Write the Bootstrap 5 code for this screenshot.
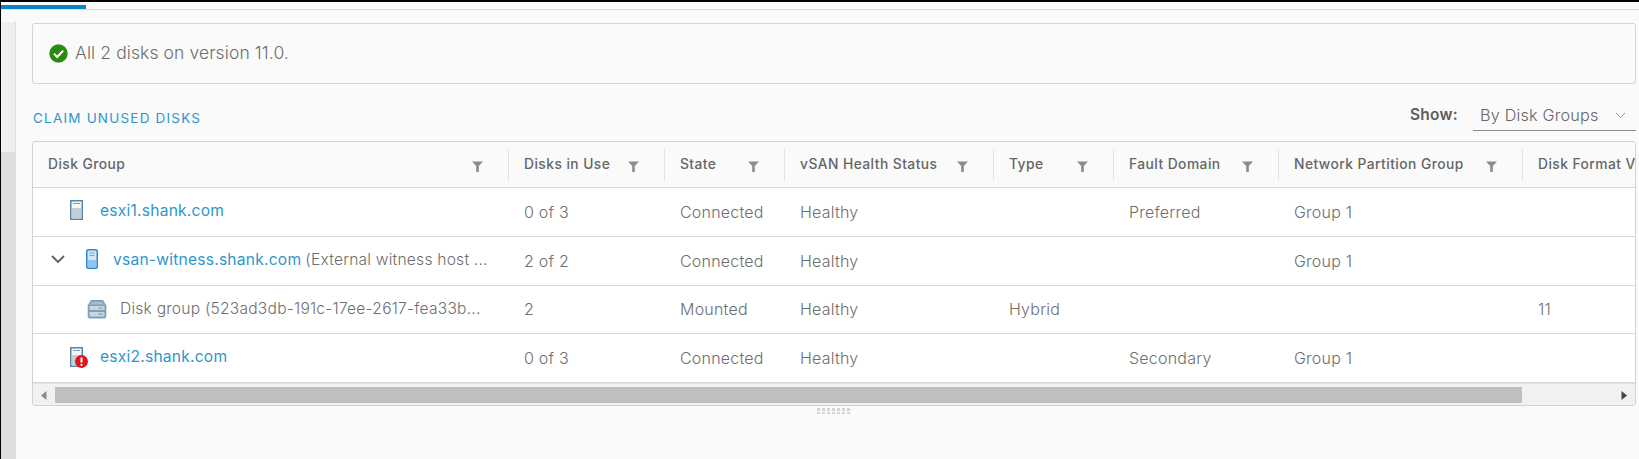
<!DOCTYPE html>
<html lang="en">
<head>
<meta charset="utf-8">
<title>vSAN Disk Management</title>
<link rel="stylesheet" href="https://cdn.jsdelivr.net/npm/bootstrap@5.3.0/dist/css/bootstrap.min.css">
<style>
html,body{height:100%;}
body{background:#fafafa;font-family:Inter,"Liberation Sans",sans-serif;font-size:15px;color:#707070;border-left:1px solid #000;overflow:hidden;}
.topline{height:2px;background:#000;margin-left:-1px;}
.tabstrip{height:8px;border-bottom:1px solid #dcdcdc;padding-top:3px;}
.tabmark{width:85px;height:4px;background:#0a84c6;}
.rail-wrap{padding-top:12px;width:15px;flex:none;}
.rail{width:15px;border-right:1px solid #dcdcdc;height:calc(100vh - 22px);background:linear-gradient(#efefef 130px,#dedede 130px);}
.content{padding:13px 3px 0 16px;min-width:0;flex:1;}
.notice{height:61px;border:1px solid #d4d4d4;border-radius:3px;padding-left:16px;gap:7px;font-size:17.5px;font-weight:300;color:#6e6e6e;letter-spacing:.1px;}
.toolbar{height:47px;margin-bottom:10px;}
.claim{color:#2f96cb;font-size:13.5px;letter-spacing:1.2px;font-weight:400;text-transform:uppercase;margin-bottom:3px;text-decoration:none;margin-left:1px;}
.showlbl{font-size:15.5px;font-weight:600;color:#5c5c5c;margin-right:15px;margin-bottom:5px;letter-spacing:.25px;}
.pick{width:163px;height:31px;border-bottom:1px solid #8a8a8a;padding-left:7px;padding-right:10px;font-size:16.2px;font-weight:300;color:#666;letter-spacing:.2px;}
.gridbox{border:1px solid #d2d2d2;border-radius:3px;overflow:hidden;background:#fff;}
.grid-scroll{overflow:hidden;}
.vtable{table-layout:fixed;width:1700px;margin:0;border-collapse:separate;border-spacing:0;--bs-table-bg:transparent;}
.vtable th{background:#fafafa;padding:0;height:46px;border-bottom:1px solid #d8d8d8;font-size:13.8px;font-weight:500;color:#666;letter-spacing:.45px;vertical-align:middle;}
.headcell{height:31px;border-right:1px solid #e2e2e2;padding:0 25px 0 15px;white-space:nowrap;overflow:hidden;}
.headcell svg{margin-top:3px;flex:none;}
.vtable th:last-child .headcell{border-right:0;overflow:visible;}
.vtable td{height:48.8px;padding:0 15px;border-bottom:1px solid #d8d8d8;vertical-align:middle;font-size:16px;font-weight:300;color:#6e6e6e;white-space:nowrap;overflow:hidden;letter-spacing:.22px;}
.vtable a{color:#2f96cb;text-decoration:none;font-weight:400;font-size:15.6px;}
.namewrap{height:100%;margin-bottom:3px;font-size:15.6px;}
.ind1{padding-left:22px;gap:17px;}
.ind3{padding-left:39px;gap:13px;margin-bottom:1px;}
.chev{width:20px;margin-right:18px;flex:none;}
.hostic{width:12px;margin-right:15px;flex:none;}
.hostbox{width:13px;height:20px;flex:none;}
.alertmark{left:5px;top:8px;}
.scrollrow{height:22px;background:#f1f1f1;border-top:1px solid #e4e4e4;padding:3px 0 2px;}
.sbend{width:22px;flex:none;}
.sbthumb{width:1467px;background:#bfbfbf;flex:none;}
.grip{width:34px;height:6px;margin:2px auto 0;display:grid;grid-template-columns:repeat(7,3px);grid-template-rows:repeat(2,2.5px);gap:1px 2px;}
.grip i{background:#d4d4d4;display:block;}
</style>
</head>
<body>
<div class="topline"></div>
<div class="tabstrip"><div class="tabmark"></div></div>
<div class="d-flex">
  <div class="rail-wrap"><div class="rail"></div></div>
  <main class="content">
    <div class="notice d-flex align-items-center">
      <svg width="19" height="19" viewBox="0 0 19 19"><circle cx="9.5" cy="9.5" r="9.2" fill="#2a8a12"/><path d="M5 9.8l3.2 3.2 6-6.4" fill="none" stroke="#fff" stroke-width="2"/></svg>
      <span>All 2 disks on version 11.0.</span>
    </div>
    <div class="toolbar d-flex justify-content-between align-items-end">
      <a class="claim" href="#">Claim Unused Disks</a>
      <div class="d-flex align-items-end">
        <span class="showlbl">Show:</span>
        <div class="pick d-flex align-items-center justify-content-between">
          <span>By Disk Groups</span>
          <svg width="11" height="7" viewBox="0 0 11 7"><path d="M1 1l4.5 4.5L10 1" fill="none" stroke="#9a9a9a" stroke-width="1"/></svg>
        </div>
      </div>
    </div>
    <div class="gridbox">
      <div class="grid-scroll">
        <table class="table vtable">
          <colgroup><col style="width:476px"><col style="width:156px"><col style="width:120px"><col style="width:209px"><col style="width:120px"><col style="width:165px"><col style="width:244px"><col style="width:210px"></colgroup>
          <thead>
            <tr>
              <th><div class="headcell d-flex align-items-center justify-content-between">Disk Group<svg width="11" height="11" viewBox="0 0 11 11"><path d="M0 .5h11L6.800 5v6H4.200V5z" fill="#8c8c8c"/></svg></div></th>
              <th><div class="headcell d-flex align-items-center justify-content-between">Disks in Use<svg width="11" height="11" viewBox="0 0 11 11"><path d="M0 .5h11L6.800 5v6H4.200V5z" fill="#8c8c8c"/></svg></div></th>
              <th><div class="headcell d-flex align-items-center justify-content-between">State<svg width="11" height="11" viewBox="0 0 11 11"><path d="M0 .5h11L6.800 5v6H4.200V5z" fill="#8c8c8c"/></svg></div></th>
              <th><div class="headcell d-flex align-items-center justify-content-between">vSAN Health Status<svg width="11" height="11" viewBox="0 0 11 11"><path d="M0 .5h11L6.800 5v6H4.200V5z" fill="#8c8c8c"/></svg></div></th>
              <th><div class="headcell d-flex align-items-center justify-content-between">Type<svg width="11" height="11" viewBox="0 0 11 11"><path d="M0 .5h11L6.800 5v6H4.200V5z" fill="#8c8c8c"/></svg></div></th>
              <th><div class="headcell d-flex align-items-center justify-content-between">Fault Domain<svg width="11" height="11" viewBox="0 0 11 11"><path d="M0 .5h11L6.800 5v6H4.200V5z" fill="#8c8c8c"/></svg></div></th>
              <th><div class="headcell d-flex align-items-center justify-content-between">Network Partition Group<svg width="11" height="11" viewBox="0 0 11 11"><path d="M0 .5h11L6.800 5v6H4.200V5z" fill="#8c8c8c"/></svg></div></th>
              <th><div class="headcell d-flex align-items-center">Disk Format Version</div></th>
            </tr>
          </thead>
          <tbody>
            <tr>
              <td><div class="namewrap d-flex align-items-center ind1">
                <svg class="hostbox" viewBox="0 0 13 20"><rect x=".75" y=".75" width="11.5" height="18.5" fill="#f5f7f8" stroke="#5a87a5" stroke-width="1.5"/><rect x="2" y="8" width="9" height="10.500" fill="#c3cfd8"/><path d="M3 3.500h7" stroke="#7d9db3"/></svg>
                <a href="#">esxi1.shank.com</a></div></td>
              <td>0 of 3</td><td>Connected</td><td>Healthy</td><td></td><td>Preferred</td><td>Group 1</td><td></td>
            </tr>
            <tr>
              <td><div class="namewrap d-flex align-items-center">
                <svg class="chev" height="9" viewBox="0 0 14 9"><path d="M1 1l6 6 6-6" fill="none" stroke="#5f5f5f" stroke-width="1.8"/></svg>
                <svg class="hostic" height="20" viewBox="0 0 12 20"><rect x=".75" y=".75" width="10.500" height="18.500" rx="1.500" fill="#cfe6f7" stroke="#2f86cf" stroke-width="1.500"/><rect x="2" y="11" width="8" height="7.500" fill="#8fc4ec"/><path d="M3.500 4h5M3.500 6.500h5" stroke="#6aa9d8"/></svg>
                <a href="#">vsan-witness.shank.com</a><span class="ms-1">(External witness host ...</span></div></td>
              <td>2 of 2</td><td>Connected</td><td>Healthy</td><td></td><td></td><td>Group 1</td><td></td>
            </tr>
            <tr>
              <td><div class="namewrap d-flex align-items-center ind3">
                <svg width="20" height="20" viewBox="0 0 20 20" class="flex-shrink-0"><path d="M.7 6.500 4 1h12l3.300 5.500v11.500l-1.500 1.500H2.200L.7 18z" fill="#7f9fb5"/><path d="M2.500 7h15v4h-15zM2.500 13h15v4.500h-15z" fill="#c9d6df"/><path d="M4.800 2.800h10.400l1.700 2.700H3.100z" fill="#a9bfce"/><path d="M11.500 9h4M11.500 15.200h4" stroke="#6f93ab" stroke-width="1"/></svg>
                <span>Disk group (523ad3db-191c-17ee-2617-fea33b...</span></div></td>
              <td>2</td><td>Mounted</td><td>Healthy</td><td>Hybrid</td><td></td><td></td><td>11</td>
            </tr>
            <tr>
              <td><div class="namewrap d-flex align-items-center ind1">
                <span class="position-relative d-block hostbox">
                  <svg class="d-block hostbox" viewBox="0 0 13 20"><rect x=".75" y=".75" width="11.500" height="18.500" fill="#f5f7f8" stroke="#5a87a5" stroke-width="1.500"/><rect x="2" y="8" width="9" height="10.500" fill="#c3cfd8"/><path d="M3 3.500h7" stroke="#7d9db3"/></svg>
                  <svg class="position-absolute alertmark" width="13" height="13" viewBox="0 0 13 13"><circle cx="6.500" cy="6.500" r="6.500" fill="#e0141c"/><path d="M6.500 2.500v5" stroke="#fff" stroke-width="2"/><circle cx="6.500" cy="9.800" r="1.100" fill="#fff"/></svg>
                </span>
                <a href="#">esxi2.shank.com</a></div></td>
              <td>0 of 3</td><td>Connected</td><td>Healthy</td><td></td><td>Secondary</td><td>Group 1</td><td></td>
            </tr>
          </tbody>
        </table>
      </div>
      <div class="scrollrow d-flex">
        <div class="sbend d-flex align-items-center justify-content-center"><svg width="6" height="9" viewBox="0 0 6 9"><path d="M5.500 0v9L0 4.500z" fill="#8a8a8a"/></svg></div>
        <div class="sbthumb"></div>
        <div class="flex-grow-1 d-flex align-items-center justify-content-end pe-2"><svg width="6" height="9" viewBox="0 0 6 9"><path d="M.5 0v9L6 4.500z" fill="#444"/></svg></div>
      </div>
    </div>
    <div class="grip"><i></i><i></i><i></i><i></i><i></i><i></i><i></i><i></i><i></i><i></i><i></i><i></i><i></i><i></i></div>
  </main>
</div>
<script src="https://cdn.jsdelivr.net/npm/bootstrap@5.3.0/dist/js/bootstrap.bundle.min.js"></script>
</body>
</html>
